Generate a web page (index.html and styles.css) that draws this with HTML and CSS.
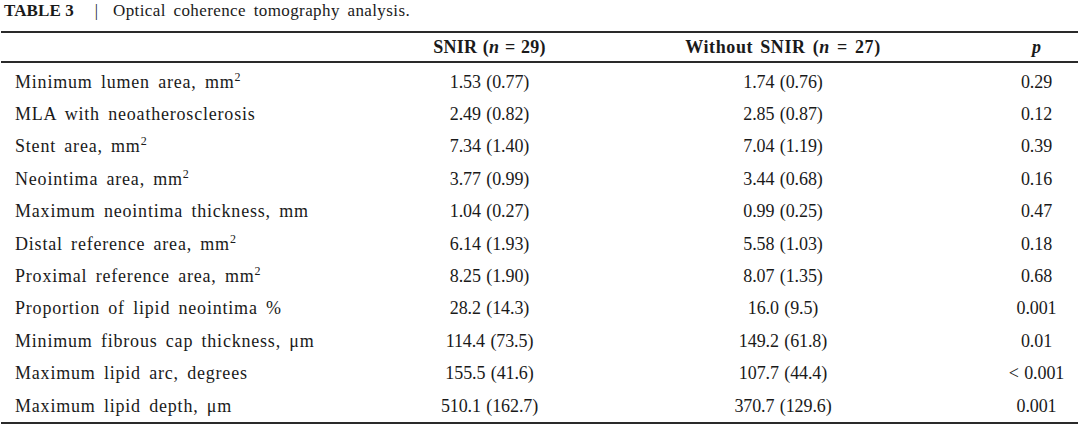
FILE: index.html
```html
<!DOCTYPE html>
<html>
<head>
<meta charset="utf-8">
<link rel="stylesheet" href="styles.css">
</head>
<body>
<div class="page">
  <div class="caption"><span class="label">TABLE 3</span><span class="sep">|</span><span class="title">Optical coherence tomography analysis.</span></div>
  <div class="table">
    <div class="row head">
      <div class="c1"></div>
      <div class="c">SNIR (<i>n</i> = 29)</div>
      <div class="c wide">Without SNIR (<i>n</i> = 27)</div>
      <div class="c"><i>p</i></div>
    </div>
    <div class="body">
      <div class="row"><div class="c1">Minimum lumen area, mm<sup>2</sup></div><div class="c">1.53 (0.77)</div><div class="c">1.74 (0.76)</div><div class="c">0.29</div></div>
      <div class="row"><div class="c1">MLA with neoatherosclerosis</div><div class="c">2.49 (0.82)</div><div class="c">2.85 (0.87)</div><div class="c">0.12</div></div>
      <div class="row"><div class="c1">Stent area, mm<sup>2</sup></div><div class="c">7.34 (1.40)</div><div class="c">7.04 (1.19)</div><div class="c">0.39</div></div>
      <div class="row"><div class="c1">Neointima area, mm<sup>2</sup></div><div class="c">3.77 (0.99)</div><div class="c">3.44 (0.68)</div><div class="c">0.16</div></div>
      <div class="row"><div class="c1">Maximum neointima thickness, mm</div><div class="c">1.04 (0.27)</div><div class="c">0.99 (0.25)</div><div class="c">0.47</div></div>
      <div class="row"><div class="c1">Distal reference area, mm<sup>2</sup></div><div class="c">6.14 (1.93)</div><div class="c">5.58 (1.03)</div><div class="c">0.18</div></div>
      <div class="row"><div class="c1">Proximal reference area, mm<sup>2</sup></div><div class="c">8.25 (1.90)</div><div class="c">8.07 (1.35)</div><div class="c">0.68</div></div>
      <div class="row"><div class="c1">Proportion of lipid neointima %</div><div class="c">28.2 (14.3)</div><div class="c">16.0 (9.5)</div><div class="c">0.001</div></div>
      <div class="row"><div class="c1">Minimum fibrous cap thickness, μm</div><div class="c">114.4 (73.5)</div><div class="c">149.2 (61.8)</div><div class="c">0.01</div></div>
      <div class="row"><div class="c1">Maximum lipid arc, degrees</div><div class="c">155.5 (41.6)</div><div class="c">107.7 (44.4)</div><div class="c">&lt; 0.001</div></div>
      <div class="row"><div class="c1">Maximum lipid depth, μm</div><div class="c">510.1 (162.7)</div><div class="c">370.7 (129.6)</div><div class="c">0.001</div></div>
    </div>
  </div>
</div>
</body>
</html>
```
FILE: styles.css
```css
html, body {
  margin: 0;
  padding: 0;
  background: #ffffff;
}
body {
  font-family: "Liberation Serif", "Times New Roman", serif;
  color: #1a1a1a;
}
.page {
  width: 1080px;
  height: 426px;
  overflow: hidden;
}
.caption {
  display: flex;
  align-items: center;
  height: 22px;
  padding-left: 4px;
  margin-bottom: 9px;
  font-size: 17px;
  line-height: 22px;
}
.caption .label {
  font-weight: bold;
  font-size: 17px;
  letter-spacing: 0.1px;
}
.caption .sep {
  margin: 0 15px 0 21px;
  font-size: 16px;
}
.caption .title {
  letter-spacing: 0.4px;
  word-spacing: 3px;
}
.table {
  margin-left: 1px;
  width: 1077px;
  border-top: 2px solid #2a2a2a;
  border-bottom: 2px solid #2a2a2a;
}
.row {
  display: grid;
  grid-template-columns: 407px 163px 424px 83px;
  align-items: center;
  height: 32.4px;
  font-size: 18px;
}
.row.head {
  height: 28px;
  font-weight: bold;
  border-bottom: 2px solid #2a2a2a;
}
.row.head .c {
  letter-spacing: 0.2px;
  word-spacing: 1px;
}
.row.head .c.wide {
  letter-spacing: 0.6px;
  word-spacing: 2px;
}
.body {
  padding-top: 3px;
}
.c1 {
  padding-left: 14px;
  white-space: nowrap;
  letter-spacing: 0.8px;
  word-spacing: 3px;
}
.c {
  text-align: center;
  white-space: nowrap;
  letter-spacing: -0.1px;
  word-spacing: 1px;
}
sup {
  font-size: 12px;
  line-height: 0;
  vertical-align: 7px;
  letter-spacing: 0;
}
```
